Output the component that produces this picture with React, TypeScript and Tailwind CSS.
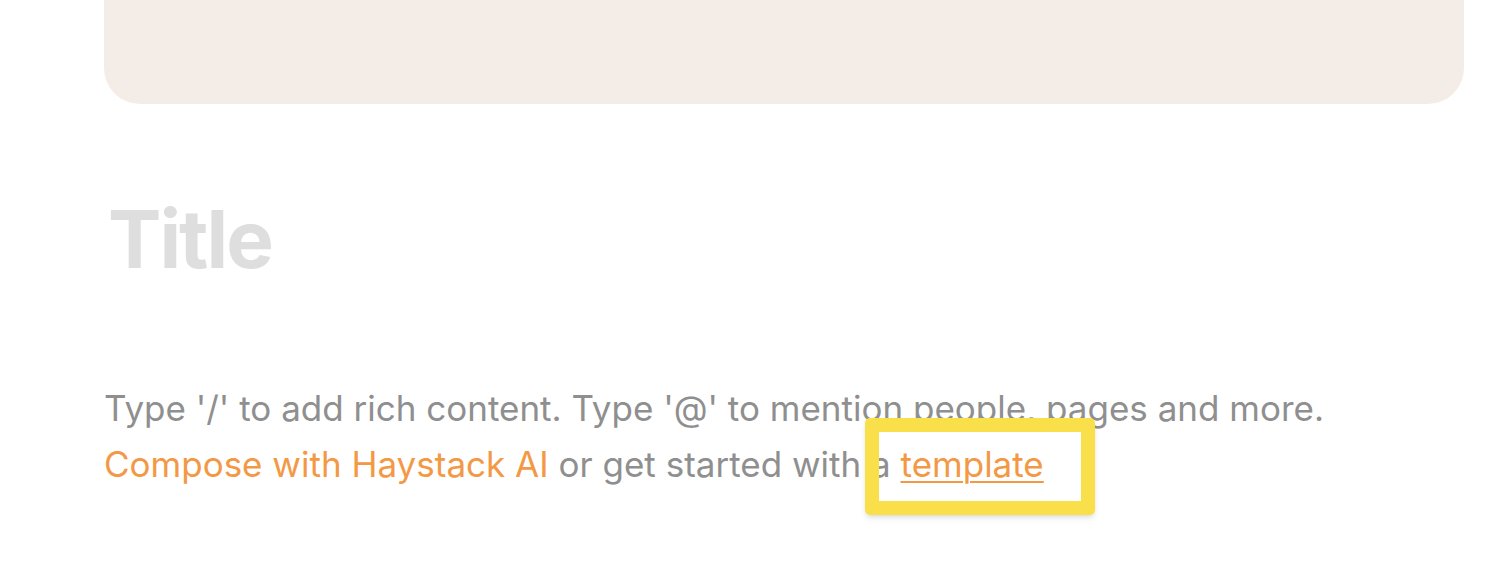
export default function App() {
  return (
    <div className="min-h-[586px] bg-white" style={{ fontFamily: 'Inter, "Liberation Sans", sans-serif' }}>
      <div className="pl-[104px] pr-[36px]">
        {/* Cover */}
        <div className="h-[104px] rounded-b-[36px] bg-[#f4ece6]" />

        {/* Title */}
        <h1 className="mt-[85px] pl-[4px] text-[80px] font-bold leading-[100px] tracking-[-2px] text-[#dedede]">Title</h1>

        {/* Placeholder */}
        <div className="relative mt-[91px] text-[35px] leading-[56px] text-[#8f8f8f]">
          <p>Type '/' to add rich content. Type '@' to mention people, pages and more.</p>
          <p>
            <span className="text-[#f39945]">Compose with Haystack AI</span> or get started with a{' '}
            <span className="text-[#f39945] underline decoration-2 underline-offset-[4px]">template</span>
          </p>
          <div className="absolute left-[761px] top-[38px] h-[97px] w-[230px] rounded-[5px] border-[14px] border-[#f9df4a] shadow-md" />
        </div>
      </div>
    </div>
  );
}
